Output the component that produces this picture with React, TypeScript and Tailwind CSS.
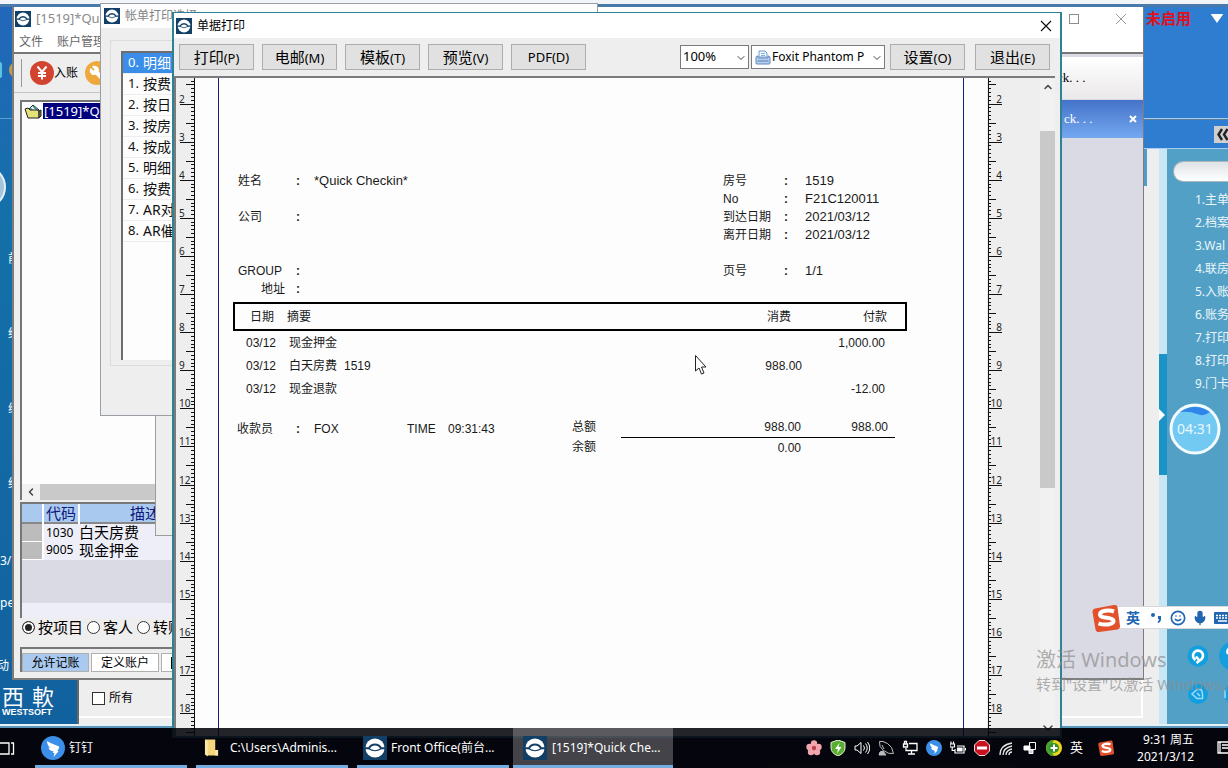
import type { ReactNode } from "react";
import { ChevronDown, ChevronLeft, ChevronUp, Mic, Smile, Wrench } from "lucide-react";

const UI = "font-['Noto_Sans','Noto_Sans_CJK_SC',sans-serif]";
const PRINT = "font-['Liberation_Sans','Noto_Sans_CJK_SC',sans-serif]";

function AppIcon({ className }: { className: string }) {
  return (
    <svg viewBox="0 0 24 24" className={className} aria-hidden="true">
      <rect width="24" height="24" fill="#123f66" />
      <circle cx="12" cy="12" r="9.6" fill="#fff" />
      <path d="M1.500 12.200h4.500Q8 8.600 12 8.600t6 3.600h4.500" fill="none" stroke="#123f66" strokeWidth="2" />
      <path d="M5.500 12.500q6.500 4.500 13 0" fill="none" stroke="#123f66" strokeWidth="1.200" />
    </svg>
  );
}

function SogouIcon({ className }: { className: string }) {
  return (
    <svg viewBox="0 0 28 28" className={className} aria-hidden="true">
      <path d="M3 4.500 22 1q3-.5 3.500 2L28 22q.3 3-2.500 3.500L7 28q-3 .3-3.500-2.500L.5 8q-.3-3 2.500-3.500z" fill="#e2502c" />
      <path d="M22 7.500c-5-1.800-14-1-14 3 0 4.500 13 2 13.500 6.200.3 4-9 5-15 2.600" fill="none" stroke="#fff" strokeWidth="4" />
    </svg>
  );
}

function BirdIcon({ className }: { className: string }) {
  return (
    <svg viewBox="0 0 24 24" className={className} aria-hidden="true">
      <circle cx="12" cy="12" r="12" fill="#3b8fe8" />
      <path d="M6 5c4 2.500 8 3.500 12 5.500.6 1.500-.8 3-1.800 4.500h1.600L12.500 21l1-4h-1.800l.8-1.800C8.500 15 8 13 7.500 11.500l2 .3C7 10 6 8 6 5z" fill="#fff" />
    </svg>
  );
}

const PITCH = 38.1;
const FIRST = 25.500;

function Ruler({ side }: { side: "left" | "right" }) {
  const edge = side === "left" ? 18 : 1;
  const dir = side === "left" ? -1 : 1;
  const ticks: ReactNode[] = [];
  for (let i = -6; i <= 166; i++) {
    const y = Math.round(FIRST + (i * PITCH) / 10) + 0.5;
    const len = i % 10 === 0 ? 14 : i % 5 === 0 ? 8 : 3;
    ticks.push(<path key={i} d={`M${edge} ${y}h${dir * len}`} />);
  }
  return (
    <svg className="block h-[660px] w-full" aria-hidden="true">
      <g stroke="#111" strokeWidth="1">
        <path d={`M${edge + 0.5} 0V660`} />
        {ticks}
      </g>
      {Array.from({ length: 17 }, (_, i) => (
        <text
          key={i}
          x={side === "left" ? 3 : 15}
          y={Math.round(FIRST + i * PITCH) - 1}
          textAnchor={side === "left" ? "start" : "end"}
          fontSize="10"
          fill="#222"
        >
          {i + 2}
        </text>
      ))}
    </svg>
  );
}

function ToolButton({ label, hotkey }: { label: string; hotkey: string }) {
  return (
    <button type="button" className="h-[26px] w-[75px] border border-[#adadad] bg-[#e1e1e1] text-[13px] leading-[22px] whitespace-nowrap text-black">
      <span className={label === "PDF" ? "text-[13px]" : "text-[15px]"}>{label}</span>({hotkey})
    </button>
  );
}

function Field({ label, value, alignRight }: { label: string; value?: string; alignRight?: boolean }) {
  return (
    <>
      <dt className={alignRight ? "pr-[10px] text-right" : ""}>{label}</dt>
      <dd className="pl-px font-bold">{label ? ":" : ""}</dd>
      <dd className="text-[13px]">{value}</dd>
    </>
  );
}

const items = [
  { date: "03/12", text: "现金押金", note: "", charge: "", paid: "1,000.00" },
  { date: "03/12", text: "白天房费", note: "1519", charge: "988.00", paid: "" },
  { date: "03/12", text: "现金退款", note: "", charge: "", paid: "-12.00" },
];

function Receipt() {
  return (
    <div className={`h-full border-x border-[#1c1c80] pt-[94px] text-xs text-[#1a1a1a] ${PRINT}`}>
      <div className="grid grid-cols-[485px_1fr] pl-[19px] leading-[18px]">
        <dl className="grid auto-rows-[18px] grid-cols-[57px_19px_1fr]">
          <Field label="姓名" value="*Quick Checkin*" />
          <Field label="" />
          <Field label="公司" />
          <Field label="" />
          <Field label="" />
          <Field label="GROUP" />
          <Field label="地址" alignRight />
        </dl>
        <dl className="grid auto-rows-[18px] grid-cols-[60px_22px_1fr]">
          <Field label="房号" value="1519" />
          <Field label="No" value="F21C120011" />
          <Field label="到达日期" value="2021/03/12" />
          <Field label="离开日期" value="2021/03/12" />
          <Field label="" />
          <Field label="页号" value="1/1" />
        </dl>
      </div>
      <div className="mt-1 pr-14 pl-[14px]">
        <table className="w-full table-fixed border-separate border-spacing-0">
          <colgroup>
            <col className="w-[54px]" />
            <col />
            <col className="w-[105px]" />
            <col className="w-[105px]" />
          </colgroup>
          <thead>
            <tr className="h-[29px] text-left">
              <th className="border-y-2 border-l-2 border-black pl-[15px] font-normal">日期</th>
              <th className="border-y-2 border-black font-normal">摘要</th>
              <th className="border-y-2 border-black pr-[11px] text-right font-normal">消费</th>
              <th className="border-y-2 border-r-2 border-black pr-[18px] text-right font-normal">付款</th>
            </tr>
          </thead>
          <tbody>
            {items.map((it) => (
              <tr key={it.text} className="h-[23px]">
                <td className="p-0 pl-[13px]">{it.date}</td>
                <td className="p-0 pl-[2px]">
                  {it.text}
                  {it.note && <span className="ml-[7px]">{it.note}</span>}
                </td>
                <td className="p-0 text-right">{it.charge}</td>
                <td className="p-0 pr-[22px] text-right">{it.paid}</td>
              </tr>
            ))}
          </tbody>
        </table>
      </div>
      <div className="mt-[17px] flex pl-[18px] leading-6">
        <span className="w-[58px]">收款员</span>
        <span className="w-[19px] pl-px font-bold">:</span>
        <span className="w-[93px]">FOX</span>
        <span className="w-[41px]">TIME</span>
        <span className="w-[124px]">09:31:43</span>
        <span className="w-[49px] leading-5">
          总额
          <br />
          余额
        </span>
        <div className="w-[274px] leading-5">
          <div className="flex border-b border-black">
            <span className="w-[180px] text-right">988.00</span>
            <span className="w-[87px] text-right">988.00</span>
          </div>
          <div className="w-[180px] text-right">0.00</div>
        </div>
      </div>
    </div>
  );
}

function PrintWindow() {
  return (
    <section className="absolute top-3 right-[166px] bottom-[30px] left-[172px] flex flex-col overflow-hidden border-2 border-t border-[#2e8296] bg-[#eeeeee]">
      <header className="flex h-[25px] shrink-0 items-center bg-white pl-[2px]">
        <AppIcon className="size-4" />
        <h1 className="ml-[5px] flex-1 text-xs text-black">单据打印</h1>
        <button type="button" aria-label="关闭" className="mr-2">
          <svg viewBox="0 0 12 12" className="size-3" stroke="#111" strokeWidth="1.200">
            <path d="M1 1l10 10M11 1L1 11" />
          </svg>
        </button>
      </header>
      <div className="flex h-[38px] shrink-0 items-center pr-[10px] pl-[5px]">
        <div className="flex flex-1 gap-2">
          <ToolButton label="打印" hotkey="P" />
          <ToolButton label="电邮" hotkey="M" />
          <ToolButton label="模板" hotkey="T" />
          <ToolButton label="预览" hotkey="V" />
          <ToolButton label="PDF" hotkey="D" />
        </div>
        <div className="relative mr-[2px]">
          <select aria-label="缩放" className="block h-6 w-[69px] appearance-none border border-[#7a7a7a] bg-white pl-[2px] text-[13px] text-black">
            <option>100%</option>
          </select>
          <ChevronDown className="pointer-events-none absolute top-[7px] right-[2px] size-3 text-[#444]" />
        </div>
        <div className="relative mr-[5px]">
          <select aria-label="打印机" className="block h-6 w-[134px] appearance-none border border-[#7a7a7a] bg-white pr-4 pl-[20px] text-xs text-black">
            <option>Foxit Phantom P</option>
          </select>
          <svg viewBox="0 0 16 16" className="pointer-events-none absolute top-1 left-1 size-4">
            <path d="M4 8V2h6l2 2v4z" fill="#f4faff" stroke="#6d9cd0" />
            <path d="M6 4.500h4M6 6.500h4" stroke="#86aedb" />
            <path d="M1 8.500Q1 7 3 7v2h10V7q2 0 2 1.500V14q0 1-1 1H2q-1 0-1-1z" fill="#b9d0ec" stroke="#5c86bd" />
            <path d="M2.500 12h11" stroke="#4d7ab5" />
          </svg>
          <ChevronDown className="pointer-events-none absolute top-[7px] right-[2px] size-3 text-[#444]" />
        </div>
        <div className="flex gap-[10px]">
          <ToolButton label="设置" hotkey="O" />
          <ToolButton label="退出" hotkey="E" />
        </div>
      </div>
      <div className="mr-[5px] flex min-h-0 flex-1 border-t-2 border-l-2 border-[#7b7b7b]">
        <div className="w-[19px] shrink-0 overflow-hidden">
          <Ruler side="left" />
        </div>
        <main className="flex-1 bg-[#fdfdfd] px-[23px]">
          <Receipt />
        </main>
        <div className="w-[53px] shrink-0 overflow-hidden">
          <Ruler side="right" />
        </div>
        <div className="flex w-[15px] shrink-0 flex-col items-center bg-[#f1f1f1]">
          <ChevronUp className="my-[3px] size-3 text-[#444]" strokeWidth={3} />
          <div className="mt-[35px] h-[357px] w-full bg-[#c9c9c9]" />
          <ChevronDown className="mt-auto size-4 text-[#333]" />
        </div>
      </div>
    </section>
  );
}

const choices = ["明细", "按费", "按日", "按房", "按成", "明细", "按费", "AR对", "AR催"];

function ChoiceDialog() {
  return (
    <section className="absolute top-[3px] left-[100px] h-[413px] w-[498px] border border-[#9a9fa6] bg-[#eeeeee]">
      <header className="flex h-6 items-center bg-[#fdfdfd] pl-[3px]">
        <AppIcon className="size-4" />
        <h2 className="ml-[5px] text-xs text-[#858585]">帐单打印选择</h2>
      </header>
      <div className="mt-3 ml-[9px] h-[326px] border border-[#dcdcdc] pt-[10px] pl-[10px]">
        <ol className="h-[309px] border-t-2 border-l-2 border-[#6e6e6e] bg-[#fdfdfd] text-[13px]">
          {choices.map((text, i) => (
            <li
              key={i}
              className={`flex h-[21px] items-center border-b border-[#eeeeee] pl-[5px] ${i === 0 ? "bg-[#3a8eea] text-white" : "text-[#111]"}`}
            >
              <span className="w-[15px]">{i}.</span>
              <span className="text-sm">{text}</span>
            </li>
          ))}
        </ol>
      </div>
    </section>
  );
}

function AccountWindow() {
  return (
    <section className="absolute top-[7px] right-[84px] bottom-[88px] left-3 flex flex-col border-r border-b-2 border-l-2 border-[#7c7c7c] bg-[#eeeeee]">
      <header className="flex h-6 shrink-0 items-center bg-white pl-px">
        <AppIcon className="size-4" />
        <h2 className="ml-[5px] flex-1 text-[13px] text-[#8a8a8a]">[1519]*Quick</h2>
        <span className="mr-9 size-[10px] border border-[#8c8c8c]" />
        <svg viewBox="0 0 12 12" className="mr-4 size-3" stroke="#999">
          <path d="M1 1l10 10M11 1L1 11" />
        </svg>
      </header>
      <nav className="flex h-[21px] shrink-0 items-center gap-[14px] bg-white pl-[5px] text-xs text-[#666]">
        <a href="#file">文件</a>
        <a href="#account">账户管理</a>
      </nav>
      <div className="flex min-h-0 flex-1 border-t-2 border-[#777]">
        <div className="flex w-[174px] flex-col">
          <div className="flex h-[39px] shrink-0 items-center border-b border-[#c4c4c4] pl-[7px] text-xs text-black">
            <span className="mr-2 h-7 border-l border-[#999]" />
            <svg viewBox="0 0 24 24" className="size-6" aria-hidden="true">
              <circle cx="12" cy="12" r="12" fill="#d2442f" />
              <path d="M7.500 5.500l4.500 5.500 4.500-5.500M12 11v7.500M8 12h8M8 15h8" fill="none" stroke="#fff" strokeWidth="2" />
            </svg>
            <span className="mr-[7px]">入账</span>
            <span className="flex size-6 items-center justify-center rounded-full bg-[#eda93e]">
              <Wrench className="size-4 -scale-x-100 fill-white text-white" />
            </span>
          </div>
          <div className="mt-[7px] ml-[6px] flex h-[400px] w-[136px] shrink-0 flex-col border-t-2 border-l-2 border-[#777] bg-[#fdfdfd]">
            <div className="flex items-center gap-px pt-px pl-[2px]">
              <svg viewBox="0 0 18 16" className="h-4 w-[18px]" aria-hidden="true">
                <path d="M4 7l5-5 6 5v7H4z" fill="#eef4f4" stroke="#222" />
                <path d="M6 5l6 6M9 3l6 6" stroke="#2e8f8f" strokeWidth="1.500" />
                <path d="M1 6l3-1 2 2h7l2 1v7H4z" fill="#e4e27a" stroke="#222" />
                <path d="M15 8l2-1v6l-2 2z" fill="#8a8730" stroke="#222" />
              </svg>
              <span className="flex-1 overflow-hidden bg-[#00007f] px-px text-[13px] leading-4 whitespace-nowrap text-white">[1519]*Quick</span>
            </div>
            <div className="mt-auto flex h-4 items-center bg-[#f1f1f1]">
              <ChevronLeft className="mx-[3px] size-3 text-[#444]" strokeWidth={3} />
              <div className="h-full flex-1 bg-[#c9c9c9]" />
            </div>
          </div>
          <div className="mt-[2px] ml-[6px] h-[116px] shrink-0 border-t-2 border-l-2 border-[#777] bg-[#edeef8]">
            <table className="w-full table-fixed border-collapse whitespace-nowrap text-black">
              <colgroup>
                <col className="w-[21px]" />
                <col className="w-9" />
                <col />
              </colgroup>
              <thead>
                <tr className="h-[19px] border-b-2 border-[#888] bg-[#a9c9ee] text-[15px] leading-[18px] text-[#101880]">
                  <th className="border-r-2 border-r-white p-0" />
                  <th className="border-r-2 border-r-white p-0 font-normal">代码</th>
                  <th className="overflow-hidden p-0 pl-[50px] text-left font-normal">描述</th>
                </tr>
              </thead>
              <tbody className="text-[15px] leading-[17px]">
                <tr className="h-[18px]">
                  <td className="border-r-2 border-b border-white bg-[#bcbcbc]" />
                  <td className="p-0 pl-[2px] text-xs">1030</td>
                  <td className="p-0">白天房费</td>
                </tr>
                <tr className="h-[18px]">
                  <td className="border-r-2 border-b border-white bg-[#bcbcbc]" />
                  <td className="p-0 pl-[2px] text-xs">9005</td>
                  <td className="p-0">现金押金</td>
                </tr>
              </tbody>
            </table>
            <div className="h-[43px] bg-[#d9dae4]" />
          </div>
          <fieldset className="flex h-[19px] shrink-0 items-center pl-2 text-[15px] leading-[19px] whitespace-nowrap text-black">
            {["按项目", "客人", "转账"].map((t, i) => (
              <label key={t} className="mr-[4px] flex items-center gap-[3px]">
                <input
                  type="radio"
                  name="scope"
                  defaultChecked={i === 0}
                  className="size-[13px] appearance-none rounded-full border border-[#333] bg-white checked:bg-[#222] checked:shadow-[inset_0_0_0_2px_white]"
                />
                {t}
              </label>
            ))}
          </fieldset>
          <div className="mt-[10px] ml-[6px] flex gap-[2px] border-t-2 border-l-2 border-[#777] pt-1 text-xs whitespace-nowrap text-black">
            <button type="button" className="h-[19px] w-[67px] shrink-0 border border-[#b0b0b0] bg-[#a9c9ee] leading-4">允许记账</button>
            <button type="button" className="h-[19px] w-[68px] shrink-0 border border-[#b0b0b0] bg-white leading-4">定义账户</button>
            <button type="button" aria-label="明细" className="flex h-[19px] w-8 items-center border border-[#b0b0b0] bg-white pl-[9px]">
              <span className="h-3 border-l border-black" />
            </button>
          </div>
        </div>
        <div className="flex-1" />
        <div className="flex w-[90px] flex-col bg-[#d9dae4] font-['Liberation_Serif','Noto_Sans_CJK_SC',serif] text-[13px]">
          <div className="mt-[3px] h-[42px] bg-linear-to-b from-white to-[#eae8e8] pl-1 leading-[42px] text-black">ck. . .</div>
          <div className="mt-px flex h-[38px] items-center bg-linear-to-b from-[#4573c9] to-[#74a8f0] pr-[6px] pl-[11px] text-white">
            <span className="flex-1">ck. . .</span>
            <svg viewBox="0 0 8 8" className="size-2" stroke="#fff" strokeWidth="2">
              <path d="M1 1l6 6M7 1L1 7" />
            </svg>
          </div>
        </div>
      </div>
    </section>
  );
}

const menu = ["1.主单", "2.档案", "3.Wal", "4.联房", "5.入账", "6.账务", "7.打印", "8.打印", "9.门卡"];
const shortcuts = ["前", "维", "综", "维"];

function FrontOffice() {
  return (
    <section className="absolute inset-x-0 top-1 bottom-10 flex flex-col border-t-[3px] border-b-2 border-t-[#4a7aab] border-b-[#5a97bb] bg-[#eeeeee]">
      <div className="flex min-h-0 flex-1">
        <aside className="flex w-[77px] shrink-0 flex-col bg-linear-to-b from-[#2267bb] via-[#1470a8] via-30% to-[#12619f] text-xs text-white">
          <div className="h-[112px] border-b border-[#5b9bd5] pt-[55px]">
            <div className="flex gap-[7px]">
              <span className="h-4 w-[2px] rounded-r-full bg-[#5bc4dc]" />
              <span className="h-4 w-4 rounded-full bg-[#c79a4a]" />
            </div>
          </div>
          <div className="mt-[46px] size-11 -translate-x-[38px] rounded-full border-2 border-[#dff2fb] bg-[#a5c4d8]" />
          <ul className="mt-[9px] pt-[6px] pl-2">
            {shortcuts.map((s, i) => (
              <li key={i} className="h-[75px] pt-[27px]">{s}</li>
            ))}
          </ul>
          <div className="mt-4 leading-[42px]">
            <div>3/</div>
            <div>pe</div>
          </div>
          <div className="mt-auto pb-[7px] pl-[2px]">
            <div className="mb-[10px] -ml-[5px]">动</div>
            <div className="flex gap-2 text-[22px] leading-6">
              <span>西</span>
              <span>軟</span>
            </div>
            <div className="font-['Liberation_Sans',sans-serif] text-[9px] leading-[9px] font-bold">WESTSOFT</div>
          </div>
        </aside>
        <div className="flex flex-1 flex-col justify-end border-l-2 border-[#666]">
          <div className="mr-[1px] flex h-[38px] items-center border-r-2 border-b-2 border-white pl-[13px] text-xs text-black">
            <label className="flex items-center gap-1">
              <input type="checkbox" className="size-[13px] appearance-none border border-[#333] bg-white" />
              所有
            </label>
          </div>
          <div className="h-[6px]" />
        </div>
        <aside className="flex w-[84px] shrink-0 flex-col">
          <div className="flex h-[112px] items-start border-b border-[#a5cdf0] bg-[#2f7dd1] pt-[3px] pl-[2px] text-[#e01020]">
            <span className="flex-1 text-[15px] leading-4 font-bold">未启用</span>
            <svg viewBox="0 0 14 10" className="mt-1 mr-1 h-[9px] w-[14px]">
              <path d="M0 0h14L7 10z" fill="#fff" />
            </svg>
          </div>
          <div className="flex h-[30px] items-center justify-end border-t border-b border-t-[#5d7d9d] border-b-[#a5cdf0] bg-[#2f7dd1]">
            <span className="h-[17px] w-[14px] overflow-hidden bg-[#cfcfcf]">
              <svg viewBox="0 0 14 17" className="h-full" fill="none" stroke="#222" strokeWidth="2.400">
                <path d="M8 3L4.500 8.500L8 14M13.500 3L10 8.500l3.500 5.500" />
              </svg>
            </span>
          </div>
          <div className="flex min-h-0 flex-1">
            <div className="h-[37px] w-[3px] bg-[#4f9cc4]" />
            <div className="w-3" />
            <div className="flex w-2 flex-col bg-[#c9e6f5] pt-[205px]">
              <div className="flex h-[121px] items-center bg-[#1c93c7]">
                <svg viewBox="0 0 6 12" className="h-3 w-[6px]">
                  <path d="M0 0l6 6-6 6z" fill="#fff" />
                </svg>
              </div>
            </div>
            <div className="flex-1 overflow-hidden bg-[#52a0c6] pt-3 pl-[6px] text-xs text-[#eaf6fc]">
              <div className="mb-[6px] h-[21px] rounded-l-full border border-r-0 border-[#aeb7bc] bg-linear-to-b from-[#dfe3e5] to-white" />
              <ul className="pl-[22px] leading-[23px] whitespace-nowrap">
                {menu.map((m) => (
                  <li key={m}>{m}</li>
                ))}
              </ul>
            </div>
          </div>
        </aside>
      </div>
      <div className="h-[2px] bg-[#e8f1f7]" />
    </section>
  );
}

function Timer() {
  return (
    <div className="absolute top-[403px] right-[7px] size-[52px]">
      <svg viewBox="0 0 52 52" className="absolute size-full" aria-hidden="true">
        <circle cx="26" cy="26" r="24" fill="#72c9f2" stroke="#f4fbff" strokeWidth="3" />
        <path d="M11 9Q26-1 41 9q-6 5-13 2T11 9z" fill="#2f86e8" />
      </svg>
      <span className="relative block text-center text-sm leading-[52px] text-white/85">04:31</span>
    </div>
  );
}

function InputBar() {
  return (
    <div className="absolute top-[603px] right-0 flex h-[29px] items-center">
      <SogouIcon className="relative z-10 size-7" />
      <div className="-ml-1 flex h-[23px] w-28 items-center gap-[6px] overflow-hidden border-y border-[#d8d8d8] bg-white pl-[10px] text-[#2166b0]">
        <b className="text-sm">英</b>
        <svg viewBox="0 0 12 12" className="mr-[2px] ml-1 w-3 shrink-0" aria-hidden="true">
          <circle cx="3" cy="3" r="2" fill="#2166b0" />
          <path d="M8 4h3v3q0 3-3 4l-.5-1Q9 9 9 7H8z" fill="#2166b0" />
        </svg>
        <Smile className="size-4 shrink-0" strokeWidth={2.5} />
        <Mic className="size-4 shrink-0 fill-[#2166b0]" />
        <svg viewBox="0 0 18 12" className="h-3 w-[18px] shrink-0" aria-hidden="true">
          <rect width="18" height="12" rx="1" fill="#2166b0" />
          <path d="M2 3.500h14M2 6h14" stroke="#fff" strokeWidth="1.500" strokeDasharray="2 1" />
          <path d="M4 9h9" stroke="#fff" strokeWidth="1.500" />
        </svg>
      </div>
    </div>
  );
}

function RoundTools() {
  return (
    <svg viewBox="0 0 44 70" className="absolute top-[640px] right-0 h-[70px] w-11" aria-hidden="true">
      <g fill="#129fe0">
        <circle cx="14" cy="16" r="10.500" />
        <circle cx="50" cy="16" r="15" />
        <circle cx="14" cy="54" r="10" />
        <circle cx="50" cy="54" r="10" />
      </g>
      <g fill="none" stroke="#fff" strokeWidth="2.600">
        <path d="M11.500 20a5 5 0 1 1 5 0M12 16.500l3.500 4-3 2.500" />
        <path d="M44 14q-2-5 4-7" />
      </g>
      <path d="M8 54l5-4.500h4q2 3 1.500 9H13zM13 53l3 3" fill="none" stroke="#9fdcf8" strokeWidth="1.500" />
      <path d="M41 50v8" stroke="#9fdcf8" strokeWidth="1.500" />
    </svg>
  );
}

function TaskItem({ icon, children, active, className }: { icon: ReactNode; children: string; active?: boolean; className: string }) {
  return (
    <button
      type="button"
      className={`flex h-10 items-center border-b-[3px] border-[#76ade0] pt-[2px] text-left text-xs whitespace-nowrap text-white ${active ? "bg-white/25" : ""} ${className}`}
    >
      {icon}
      {children}
    </button>
  );
}

function Tray() {
  const s = "size-4 shrink-0";
  return (
    <div className="flex items-center gap-2 text-white">
      <svg viewBox="0 0 16 16" className={s} fill="#f2a5ac">
        <circle cx="8" cy="3.500" r="3.200" /><circle cx="3.500" cy="7" r="3.200" /><circle cx="5" cy="12" r="3.200" /><circle cx="11" cy="12" r="3.200" /><circle cx="12.500" cy="7" r="3.200" /><circle cx="8" cy="8" r="2" fill="#c83d50" />
      </svg>
      <svg viewBox="0 0 16 16" className={s}>
        <path d="M8 0l7 2.500V8q0 5-7 8-7-3-7-8V2.500z" fill="#5aad32" stroke="#e5f5d8" />
        <path d="M9.500 3L5 9h3l-1 4.500L11.500 7H8.500z" fill="#fff" />
      </svg>
      <svg viewBox="0 0 16 16" className={s} fill="none" stroke="#fff">
        <path d="M1 6v4h2l4 3.500v-11L3 6zM9.500 5.500q2 2.500 0 5M11.500 3.500q3.500 4.500 0 9M13.500 2q4.500 6 0 12" />
      </svg>
      <svg viewBox="0 0 16 16" className={s} fill="none" stroke="#bbb">
        <path d="M1.500 1.500q-1 5 4 9t10 3q-1-7-6-10t-8-2z" /><path d="M1 15q0-4 4-4l3 4z" fill="#bbb" /><path d="M6 9l-2-4" />
      </svg>
      <svg viewBox="0 0 16 16" className={s} fill="none" stroke="#fff" strokeWidth="1.300">
        <path d="M7 3.500h8v7H4V8M9.500 10.500V14M6 14h7M1.500 4h4v3h-4zM2.500 4V1.500h2V4" />
      </svg>
      <BirdIcon className={s} />
      <svg viewBox="0 0 16 16" className={s} fill="none" stroke="#fff" strokeWidth="1.200">
        <path d="M5 9v4h9V6H7M15 8.500h.5v2M0 4h4.500v3H0zM1 4V1.500M3.500 4V1.500M2.200 7v3.500H5" /><path d="M7.500 8H12v3H7.500z" fill="#fff" />
      </svg>
      <svg viewBox="0 0 16 16" className={s}>
        <path d="M5 .5h6L15.500 5v6L11 15.500H5L.5 11V5z" fill="#c81020" stroke="#f5dada" /><path d="M3 6.500h10v3H3z" fill="#fff" />
      </svg>
      <svg viewBox="0 0 16 16" className={s} fill="none" stroke="#e8e8e8" strokeWidth="1.300">
        <path d="M2 15Q2 5 14 3M5 15q0-7 9-9M8 15q0-4.500 6-6M11 15q0-3 3-3" />
      </svg>
      <svg viewBox="0 0 16 16" className={s} fill="none" stroke="#fff">
        <path d="M7.500 2.500h6v7h-6z" /><path d="M2 6h6v4H2z" fill="#fff" /><path d="M7 10h4v3.500H7z" fill="#ccc" />
      </svg>
      <svg viewBox="0 0 16 16" className={s}>
        <circle cx="8" cy="8" r="8" fill="#f0d51e" /><path d="M8 0a8 8 0 0 0 0 16q-5-8 0-16z" fill="#43a62e" /><circle cx="8" cy="8" r="5" fill="#328f2c" /><path d="M8 4.500v7M4.500 8h7" stroke="#fff" strokeWidth="2" />
      </svg>
      <span className="w-4 text-[13px]">英</span>
      <SogouIcon className="ml-1 size-4 shrink-0" />
    </div>
  );
}

function Taskbar() {
  return (
    <footer className="absolute inset-x-0 bottom-0 flex h-10 items-center bg-[#05050c]/88 text-xs text-white">
      <button type="button" aria-label="任务视图" className="w-[35px]">
        <svg viewBox="0 0 16 16" className="size-4" fill="none" stroke="#fff" strokeWidth="1.300">
          <path d="M-2 3H9v11H-2M11 3h2.500v11H11" />
        </svg>
      </button>
      <TaskItem className="w-[152px] pl-[6px]" icon={<BirdIcon className="mr-1 size-6 shrink-0" />}>钉钉</TaskItem>
      <TaskItem
        className="ml-[9px] w-[152px] pl-2"
        icon={
          <svg viewBox="0 0 16 20" className="mr-[11px] h-5 w-[15px] shrink-0">
            <path d="M1 1h11v11h3v6H3z" fill="#f6d67c" />
            <path d="M1 1l3 2v16L1 17zM12 12h3v6h-3z" fill="#fbe9a8" />
          </svg>
        }
      >
        C:\Users\Adminis...
      </TaskItem>
      <TaskItem className="ml-[9px] w-[152px] pl-[6px]" icon={<AppIcon className="mr-1 size-6 shrink-0" />}>Front Office(前台...</TaskItem>
      <TaskItem active className="ml-1 w-40 pl-[10px]" icon={<AppIcon className="mr-[5px] size-6 shrink-0" />}>[1519]*Quick Che...</TaskItem>
      <div className="flex-1" />
      <Tray />
      <time className="ml-5 w-[60px] text-right leading-[17px] whitespace-nowrap">
        9:31 周五
        <br />
        2021/3/12
      </time>
      <button type="button" aria-label="通知" className="ml-[22px] w-3 overflow-hidden">
        <svg viewBox="0 0 16 16" className="size-4" fill="none" stroke="#fff" strokeWidth="1.300">
          <path d="M4 2h12v11H4v-2M2 2h2v11H2zM6 5h10M6 8h10" />
        </svg>
      </button>
    </footer>
  );
}

export default function App() {
  return (
    <div className={`relative h-screen overflow-hidden bg-[#0a0a12] ${UI}`}>
      <div className="h-1 bg-[#f1f5fa]" />
      <FrontOffice />
      <AccountWindow />
      <div className="absolute top-[300px] left-[155px] h-[236px] w-[400px] border border-[#9d9d9d] bg-[#eeeeee]" />
      <ChoiceDialog />
      <PrintWindow />
      <Timer />
      <RoundTools />
      <InputBar />
      <div className="pointer-events-none absolute top-[646px] left-[1036px] whitespace-nowrap text-[#8d8d8d]/70">
        <div className="text-xl leading-7">激活 Windows</div>
        <div className="text-[15px] leading-5">转到"设置"以激活 Windows。</div>
      </div>
      <svg viewBox="0 0 12 20" className="pointer-events-none absolute top-[355px] left-[695px] h-5 w-3" aria-hidden="true">
        <path d="M.5.500v15.500l3.500-3 2.500 6 2.500-1-2.500-6h4.500z" fill="#fff" stroke="#222" />
      </svg>
      <Taskbar />
    </div>
  );
}
